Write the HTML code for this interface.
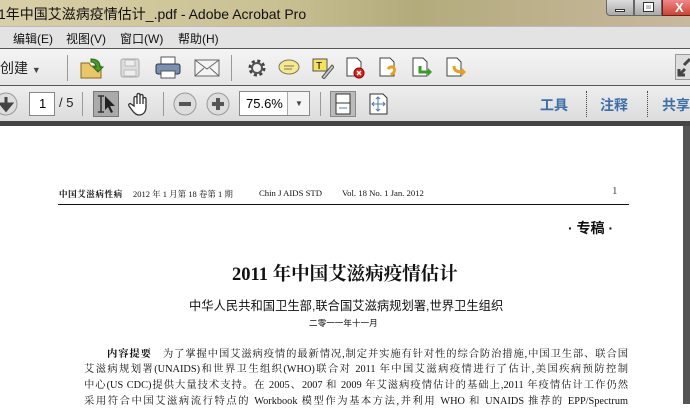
<!DOCTYPE html><html><head><meta charset="utf-8"><style>
*{margin:0;padding:0;box-sizing:border-box}
body{width:690px;height:404px;overflow:hidden;position:relative;font-family:"Liberation Sans","Noto Sans CJK SC",sans-serif;background:#fff}
.a{position:absolute;white-space:nowrap}
.title{top:0;left:0;width:690px;height:26px;background:linear-gradient(90deg,#d9cfa8,#c9c093 40%,#b3ab7c 60%,#c8b89e);font-size:14px;color:#111;padding:4px 0 0 0}
.menu{top:26px;left:0;width:690px;height:22px;background:#e3e3e3;border-top:1px solid #bbb;font-size:12px;color:#111}
.tb1{top:48px;left:0;width:690px;height:37px;background:linear-gradient(#f4f4f4,#e6e6e6);border-top:1px solid #555}
.tb2{top:85px;left:0;width:690px;height:36px;background:linear-gradient(#eee,#dcdcdc);border-top:1px solid #555}
.dark{top:121px;left:0;width:690px;height:5px;background:#444}
.rs{top:126px;left:683px;width:7px;height:278px;background:#555}
.ic{position:absolute}
.sep{position:absolute;width:1px;background:#999}
.s{font-family:"Liberation Serif","Noto Serif CJK SC",serif;color:#111}
.ln{position:absolute;font-family:"Liberation Serif","Noto Serif CJK SC",serif;color:#111;font-size:10.3px;text-align:justify;text-align-last:justify;white-space:nowrap;overflow:hidden;height:14px;line-height:14px}
</style></head><body>
<div class="a title"><span style="margin-left:-2px">1年中国艾滋病疫情估计_.pdf - Adobe Acrobat Pro</span></div>
<div class="a" style="top:0;left:606px;width:84px;height:17px;">
<div style="position:absolute;left:0;top:-1px;width:28px;height:17px;background:linear-gradient(#ddd,#aaa);border:1px solid #666;border-radius:0 0 0 4px"><div style="position:absolute;left:8px;top:9px;width:10px;height:3px;background:#fff;border:1px solid #333"></div></div>
<div style="position:absolute;left:28px;top:-1px;width:28px;height:17px;background:linear-gradient(#ddd,#aaa);border:1px solid #666"><div style="position:absolute;left:9px;top:3px;width:9px;height:8px;border:2px solid #fff;outline:1px solid #333"></div></div>
<div style="position:absolute;left:56px;top:-1px;width:30px;height:17px;background:linear-gradient(#e88,#c43);border:1px solid #622;color:#fff;font-weight:bold;font-size:13px;padding-left:12px">X</div></div>
<div class="a menu"><span class="a" style="left:13px;top:3px">编辑(E)</span><span class="a" style="left:66px;top:3px">视图(V)</span><span class="a" style="left:120px;top:3px">窗口(W)</span><span class="a" style="left:178px;top:3px">帮助(H)</span></div>
<div class="a tb1">
<span class="a" style="left:0;top:9px;font-size:14px;color:#222">创建 <span style="font-size:9px;color:#444">▼</span></span>
<div class="sep" style="left:67px;top:6px;height:26px"></div>
<svg class="ic" style="left:79px;top:6px" width="26" height="26"><path d="M2 8h8l2 3h10v12H2z" fill="#e8c66a" stroke="#8a6a20"/><path d="M12 4c6 0 9 3 9 8l3 0-5 5-5-5h3c0-3-2-5-5-5z" fill="#4a9a2a" stroke="#2a6a1a"/></svg>
<svg class="ic" style="left:119px;top:8px" width="22" height="22"><rect x="2" y="2" width="18" height="18" rx="2" fill="#ddd" stroke="#aaa"/><rect x="6" y="3" width="10" height="6" fill="#eee" stroke="#bbb"/><rect x="5" y="13" width="12" height="6" fill="#eee" stroke="#bbb"/></svg>
<svg class="ic" style="left:155px;top:7px" width="26" height="24"><rect x="6" y="1" width="14" height="8" fill="#fff" stroke="#555"/><rect x="1" y="8" width="24" height="10" rx="2" fill="#7b8fb0" stroke="#334"/><rect x="6" y="15" width="14" height="7" fill="#fff" stroke="#555"/></svg>
<svg class="ic" style="left:194px;top:10px" width="26" height="18"><rect x="1" y="1" width="24" height="16" fill="#f4f4f4" stroke="#666"/><path d="M1 1l12 9 12-9M1 17l9-8M25 17l-9-8" fill="none" stroke="#666"/></svg>
<div class="sep" style="left:231px;top:6px;height:26px"></div>
<svg class="ic" style="left:247px;top:9px" width="20" height="20"><circle cx="10" cy="10" r="7" fill="none" stroke="#444" stroke-width="3" stroke-dasharray="3 2.5"/><circle cx="10" cy="10" r="5" fill="none" stroke="#555" stroke-width="2"/></svg>
<svg class="ic" style="left:278px;top:9px" width="22" height="20"><ellipse cx="11" cy="9" rx="10" ry="7" fill="#f7e98a" stroke="#776"/><path d="M6 8h10M6 11h8" stroke="#776"/></svg>
<svg class="ic" style="left:312px;top:8px" width="22" height="22"><rect x="1" y="2" width="14" height="12" fill="#f3e25a" stroke="#555"/><text x="4" y="12" font-size="10" font-family="Liberation Sans">T</text><path d="M10 20l10-12 2 2-10 12z" fill="#ccc" stroke="#555"/></svg>
<svg class="ic" style="left:345px;top:8px" width="22" height="22"><path d="M2 1h10l4 4v14H2z" fill="#fff" stroke="#444"/><circle cx="14" cy="16" r="5" fill="#d22" stroke="#800"/><path d="M12 14l4 4M16 14l-4 4" stroke="#fff" stroke-width="1.5"/></svg>
<svg class="ic" style="left:378px;top:8px" width="22" height="22"><path d="M2 1h10l4 4v14H2z" fill="#fff" stroke="#444"/><path d="M10 12c3-4 8-2 6 3l-3 3" fill="none" stroke="#e8a020" stroke-width="3"/></svg>
<svg class="ic" style="left:411px;top:8px" width="22" height="22"><path d="M2 1h10l4 4v14H2z" fill="#fff" stroke="#444"/><path d="M9 9v6h10" fill="none" stroke="#3a9a2a" stroke-width="3"/><path d="M17 11l4 4-4 4z" fill="#3a9a2a"/></svg>
<svg class="ic" style="left:445px;top:8px" width="22" height="22"><path d="M2 1h10l4 4v14H2z" fill="#fff" stroke="#444"/><path d="M9 9c0 5 3 6 10 6" fill="none" stroke="#e8a020" stroke-width="3"/><path d="M17 11l4 4-4 4z" fill="#e8a020"/></svg>
<div class="a" style="left:675px;top:5px;width:20px;height:26px;background:#ddd;border:1px solid #999"><svg width="16" height="24"><path d="M3 20l6-6M3 14v6h6M14 4l-6 6" stroke="#444" stroke-width="3" fill="none"/></svg></div>
</div>
<div class="a tb2">
<svg class="ic" style="left:-6px;top:6px" width="26" height="26"><circle cx="12" cy="12" r="11" fill="#ddd" stroke="#999"/><path d="M12 5v9M7 12l5 6 5-6z" stroke="#444" stroke-width="3" fill="#444"/></svg>
<div class="a" style="left:29px;top:6px;width:26px;height:24px;background:#fff;border:1px solid #888;font-size:13px;padding:3px 0 0 9px">1</div>
<span class="a" style="left:59px;top:9px;font-size:13px;color:#222">/ 5</span>
<div class="sep" style="left:82px;top:6px;height:24px"></div>
<div class="a" style="left:93px;top:5px;width:26px;height:26px;background:#aaa;border:1px solid #777"><svg width="26" height="26"><path d="M4 4h6M7 4v16M4 20h6" stroke="#333" stroke-width="1.5" fill="none"/><path d="M11 4l10 10h-5l3 6-2 1-3-6-3 3z" fill="#222"/></svg></div>
<svg class="ic" style="left:128px;top:6px" width="24" height="24"><path d="M6 14V6c0-2 3-2 3 0v6V3c0-2 3-2 3 0v9V4c0-2 3-2 3 0v8V7c0-2 3-2 3 0v8c0 5-3 8-7 8-3 0-5-2-7-5l-3-4c-1-2 1-3 2-2z" fill="#fff" stroke="#333" stroke-width="1.3"/></svg>
<div class="sep" style="left:163px;top:6px;height:24px"></div>
<svg class="ic" style="left:173px;top:6px" width="24" height="24"><circle cx="12" cy="12" r="11" fill="#ddd" stroke="#999"/><rect x="6" y="10" width="12" height="4" fill="#555"/></svg>
<svg class="ic" style="left:206px;top:6px" width="24" height="24"><circle cx="12" cy="12" r="11" fill="#ddd" stroke="#999"/><rect x="6" y="10" width="12" height="4" fill="#555"/><rect x="10" y="6" width="4" height="12" fill="#555"/></svg>
<div class="a" style="left:239px;top:5px;width:71px;height:25px;background:#fff;border:1px solid #888;font-size:13px;padding:4px 0 0 6px">75.6%</div>
<div class="a" style="left:287px;top:6px;width:22px;height:23px;border-left:1px solid #aaa;background:#f4f4f4;font-size:8px;color:#444;padding:7px 0 0 7px">▼</div>
<div class="sep" style="left:320px;top:6px;height:24px"></div>
<div class="a" style="left:330px;top:5px;width:26px;height:26px;background:#bbb;border:1px solid #888"><svg width="24" height="24"><rect x="5" y="2" width="14" height="20" fill="#fff" stroke="#333"/><path d="M5 11h14" stroke="#333"/><path d="M8 16h8" stroke="#57a"/></svg></div>
<svg class="ic" style="left:368px;top:7px" width="22" height="22"><path d="M2 1h13l4 4v16H2z" fill="#fff" stroke="#333"/><path d="M10 4v14M4 11h13M8 6l2-2 2 2M8 16l2 2 2-2M6 9l-2 2 2 2M15 9l2 2-2 2" stroke="#57a" fill="none"/></svg>
<span class="a" style="left:540px;top:9px;font-size:14px;color:#3c6fa8;font-weight:bold">工具</span>
<div class="a" style="left:586px;top:5px;height:26px;border-left:1px dotted #444"></div>
<span class="a" style="left:600px;top:9px;font-size:14px;color:#3c6fa8;font-weight:bold">注释</span>
<div class="a" style="left:647px;top:5px;height:26px;border-left:1px dotted #444"></div>
<span class="a" style="left:662px;top:9px;font-size:14px;color:#3c6fa8;font-weight:bold">共享</span>
</div>
<div class="a dark"></div>
<div class="a rs"></div>
<span class="a s" style="left:59px;top:188px;font-size:8.5px;font-weight:bold;letter-spacing:0.6px">中国艾滋病性病</span>
<span class="a s" style="left:133px;top:188px;font-size:8.5px">2012 年 1 月第 18 卷第 1 期</span>
<span class="a s" style="left:259px;top:188px;font-size:8.7px">Chin J AIDS STD</span>
<span class="a s" style="left:342px;top:188px;font-size:8.7px">Vol. 18 No. 1 Jan. 2012</span>
<span class="a s" style="left:612px;top:185px;font-size:11px;color:#445">1</span>
<div class="a" style="left:58px;top:204px;width:571px;height:1px;background:#111"></div>
<span class="a" style="left:568px;top:218px;font-size:14px;color:#111;font-weight:bold">· 专稿 ·</span>
<span class="a s" style="left:232px;top:260px;font-size:18.5px;font-weight:bold">2011 年中国艾滋病疫情估计</span>
<span class="a" style="left:189px;top:296px;font-size:12.3px;color:#111">中华人民共和国卫生部,联合国艾滋病规划署,世界卫生组织</span>
<span class="a" style="left:309px;top:317px;font-size:8.6px;color:#111">二零一一年十一月</span>
<div class="ln" style="left:107px;top:348px;width:521px"><b>内容提要</b>　为了掌握中国艾滋病疫情的最新情况,制定并实施有针对性的综合防治措施,中国卫生部、联合国</div>
<div class="ln" style="left:84px;top:363px;width:544px">艾滋病规划署(UNAIDS)和世界卫生组织(WHO)联合对 2011 年中国艾滋病疫情进行了估计,美国疾病预防控制</div>
<div class="ln" style="left:84px;top:379px;width:544px">中心(US CDC)提供大量技术支持。在 2005、2007 和 2009 年艾滋病疫情估计的基础上,2011 年疫情估计工作仍然</div>
<div class="ln" style="left:84px;top:395px;width:544px">采用符合中国艾滋病流行特点的 Workbook 模型作为基本方法,并利用 WHO 和 UNAIDS 推荐的 EPP/Spectrum</div>
</body></html>
